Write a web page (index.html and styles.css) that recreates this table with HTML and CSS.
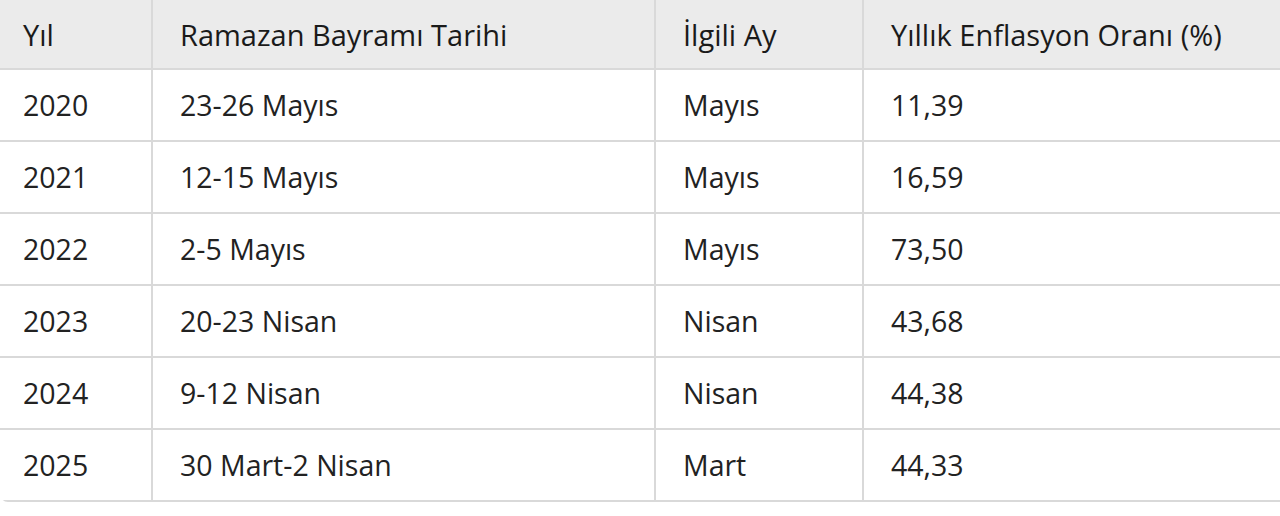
FILE: index.html
```html
<!DOCTYPE html>
<html lang="tr">
<head>
<meta charset="utf-8">
<title>Ramazan Bayramı ve Enflasyon</title>
<link rel="stylesheet" href="styles.css">
</head>
<body>
<div class="wrap">
<table class="tbl">
<colgroup>
<col class="c1"><col class="c2"><col class="c3"><col class="c4">
</colgroup>
<thead>
<tr><th>Yıl</th><th>Ramazan Bayramı Tarihi</th><th>İlgili Ay</th><th>Yıllık Enflasyon Oranı (%)</th></tr>
</thead>
<tbody>
<tr><td>2020</td><td>23-26 Mayıs</td><td>Mayıs</td><td>11,39</td></tr>
<tr><td>2021</td><td>12-15 Mayıs</td><td>Mayıs</td><td>16,59</td></tr>
<tr><td>2022</td><td>2-5 Mayıs</td><td>Mayıs</td><td>73,50</td></tr>
<tr><td>2023</td><td>20-23 Nisan</td><td>Nisan</td><td>43,68</td></tr>
<tr><td>2024</td><td>9-12 Nisan</td><td>Nisan</td><td>44,38</td></tr>
<tr><td>2025</td><td>30 Mart-2 Nisan</td><td>Mart</td><td>44,33</td></tr>
</tbody>
</table>
</div>
</body>
</html>
```
FILE: styles.css
```css
html, body {
  margin: 0;
  padding: 0;
  background: #ffffff;
}
.wrap {
  width: 1290px;
  overflow: hidden;
  border-bottom-left-radius: 8px;
}
.tbl {
  width: 1290px;
  border-collapse: collapse;
  table-layout: fixed;
  font-family: "Open Sans", "Noto Sans", sans-serif;
  font-size: 28.5px;
  color: #222222;
}
.c1 { width: 152px; }
.c2 { width: 503px; }
.c3 { width: 208px; }
.c4 { width: auto; }
.tbl th, .tbl td {
  text-align: left;
  padding: 0 0 0 27px;
  border: 2px solid #d9d9d9;
  font-weight: normal;
  white-space: nowrap;
}
.tbl th {
  background: #ebebeb;
  height: 68px;
  border-top: 0;
  color: #1a1a1a;
  font-size: 29px;
  font-weight: 500;
}
.tbl td {
  height: 70px;
}
.tbl tr > :first-child {
  border-left: 0;
  padding-left: 23px;
}
```
